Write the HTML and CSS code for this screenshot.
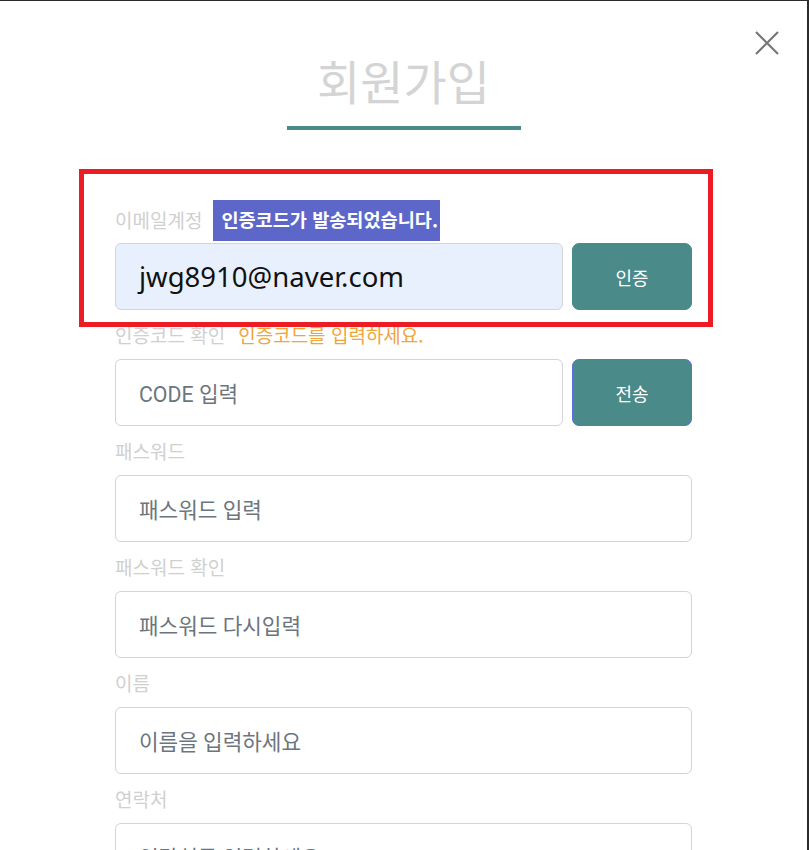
FILE: index.html
```html
<!DOCTYPE html>
<html lang="ko">
<head>
<meta charset="utf-8">
<title>회원가입</title>
<link rel="stylesheet" href="styles.css">
</head>
<body>
<div class="modal">
  <button class="close" aria-label="닫기">
    <svg width="26" height="26" viewBox="0 0 26 26"><path d="M2 2 L24 24 M24 2 L2 24" stroke="#777" stroke-width="2.2" fill="none"/></svg>
  </button>
  <h1 class="title">회원가입</h1>
  <div class="title-bar"></div>
  <form class="form">
    <div class="field">
      <div class="label-row first">
        <span class="label">이메일계정</span>
        <span class="badge">인증코드가 발송되었습니다.</span>
      </div>
      <div class="input-row">
        <div class="input filled">jwg8910@naver.com</div>
        <button type="button" class="btn">인증</button>
      </div>
    </div>
    <div class="field">
      <div class="label-row">
        <span class="label">인증코드 확인</span>
        <span class="warn">인증코드를 입력하세요.</span>
      </div>
      <div class="input-row">
        <div class="input">CODE 입력</div>
        <button type="button" class="btn focus">전송</button>
      </div>
    </div>
    <div class="field">
      <div class="label-row"><span class="label">패스워드</span></div>
      <div class="input">패스워드 입력</div>
    </div>
    <div class="field">
      <div class="label-row"><span class="label">패스워드 확인</span></div>
      <div class="input">패스워드 다시입력</div>
    </div>
    <div class="field">
      <div class="label-row"><span class="label">이름</span></div>
      <div class="input">이름을 입력하세요</div>
    </div>
    <div class="field">
      <div class="label-row"><span class="label">연락처</span></div>
      <div class="input">연락처를 입력하세요</div>
    </div>
  </form>
  <div class="highlight"></div>
</div>
</body>
</html>
```

FILE: styles.css
```css
* { box-sizing: border-box; }
html, body { margin: 0; padding: 0; }
body {
  background: #2b2b2b;
  font-family: "Roboto", "Noto Sans CJK KR", "Noto Sans", sans-serif;
  height: 850px;
  overflow: hidden;
  padding-top: 1px;
}
.modal {
  position: relative;
  width: 807px;
  height: 849px;
  background: #fff;
  overflow: hidden;
}
.close {
  position: absolute;
  left: 754px;
  top: 29px;
  width: 26px;
  height: 26px;
  padding: 0;
  border: 0;
  background: none;
}
.close svg { display: block; }
.title {
  margin: 0;
  padding-top: 49px;
  text-align: center;
  font-family: "Noto Sans CJK KR", sans-serif;
  font-weight: 400;
  font-size: 47px;
  line-height: 60px;
  color: #d4d4d4;
}
.title-bar {
  width: 234px;
  height: 4px;
  margin: 16px auto 0;
  background: #4a8a88;
}
.form {
  width: 577px;
  margin: 64px auto 0;
}
.label-row {
  height: 49px;
  display: flex;
  align-items: center;
  gap: 13px;
  font-family: "Noto Sans CJK KR", sans-serif;
  font-size: 19px;
}
.label-row.first { align-items: flex-end; padding-bottom: 2px; gap: 11px; }
.label-row.first .label { padding-bottom: 8px; }
.label { color: #d0d0d0; }
.warn { color: #f0a53a; }
.badge {
  background: #5c67c9;
  color: #fff;
  font-weight: 700;
  font-size: 18.6px;
  padding: 0 2px 0 8px;
  height: 41px;
  line-height: 38px;
}
.input-row {
  display: flex;
  gap: 9px;
}
.input {
  flex: 1;
  height: 67px;
  border: 1px solid #d3d3d8;
  border-radius: 6px;
  background: #fff;
  padding-left: 23px;
  display: flex;
  align-items: center;
  font-size: 21.3px;
  color: #6c757d;
}
.input.filled {
  background: #e8f0fe;
  color: #111;
  font-family: "Noto Sans", "Noto Sans CJK KR", sans-serif;
  font-size: 27.5px;
}
.btn {
  width: 120px;
  height: 67px;
  border: 1px solid #4a8a88;
  border-radius: 7px;
  background: #4a8a88;
  color: #fff;
  font-family: "Noto Sans CJK KR", sans-serif;
  font-size: 18px;
  padding: 0;
}
.btn.focus { border-color: #5b6ee1; }
.highlight {
  position: absolute;
  left: 79px;
  top: 168px;
  width: 634px;
  height: 158px;
  border: 5px solid #ed1c24;
  pointer-events: none;
}
```
